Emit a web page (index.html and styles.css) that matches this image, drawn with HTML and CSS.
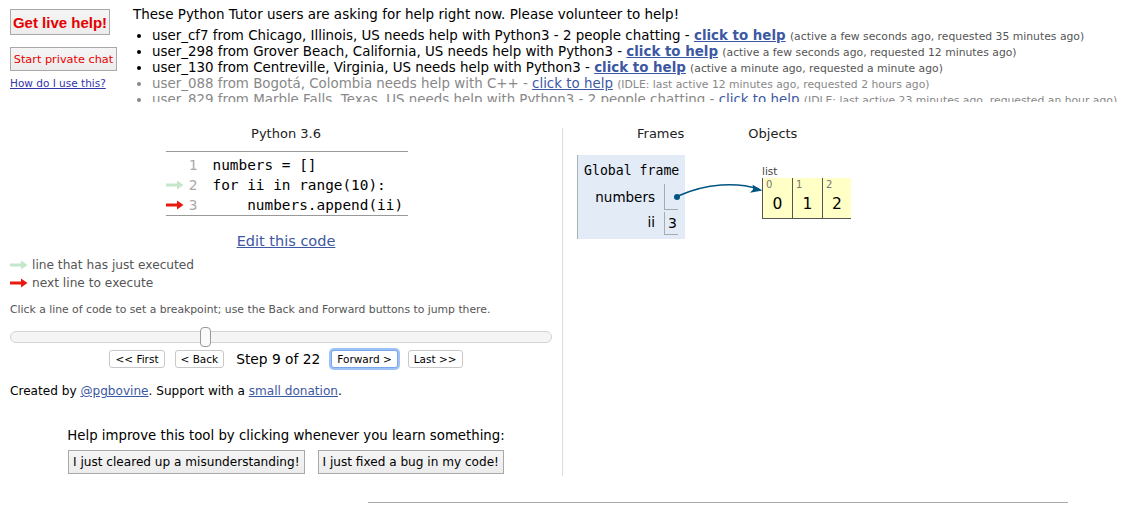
FILE: index.html
```html
<!DOCTYPE html>
<html>
<head>
<meta charset="utf-8">
<link rel="stylesheet" href="styles.css">
</head>
<body>
<div class="page">
  <div class="header">
    <div class="help-col">
      <button class="btn live-btn">Get live help!</button>
      <button class="btn chat-btn">Start private chat</button>
      <a class="howto" href="#">How do I use this?</a>
    </div>
    <div class="requests">
      <div class="req-title">These Python Tutor users are asking for help right now. Please volunteer to help!</div>
      <ul class="req-list">
        <li>user_cf7 from Chicago, Illinois, US needs help with Python3 - 2 people chatting - <a class="help-link" href="#">click to help</a> <span class="meta">(active a few seconds ago, requested 35 minutes ago)</span></li>
        <li>user_298 from Grover Beach, California, US needs help with Python3 - <a class="help-link" href="#">click to help</a> <span class="meta">(active a few seconds ago, requested 12 minutes ago)</span></li>
        <li>user_130 from Centreville, Virginia, US needs help with Python3 - <a class="help-link" href="#">click to help</a> <span class="meta">(active a minute ago, requested a minute ago)</span></li>
        <li class="idle">user_088 from Bogotá, Colombia needs help with C++ - <a class="idle-link" href="#">click to help</a> <span class="meta">(IDLE: last active 12 minutes ago, requested 2 hours ago)</span></li>
        <li class="idle">user_829 from Marble Falls, Texas, US needs help with Python3 - 2 people chatting - <a class="idle-link" href="#">click to help</a> <span class="meta">(IDLE: last active 23 minutes ago, requested an hour ago)</span></li>
      </ul>
    </div>
  </div>

  <div class="main">
    <div class="left-pane">
      <div class="lang">Python 3.6</div>
      <table class="code">
        <tr><td class="arrow"></td><td class="lineno">1</td><td class="src">numbers = []</td></tr>
        <tr><td class="arrow"><svg width="18" height="10" viewBox="0 0 18 10"><path d="M0 3.5H11V0.5L17.5 5L11 9.5V6.5H0Z" fill="#c5e6c8"/></svg></td><td class="lineno">2</td><td class="src">for ii in range(10):</td></tr>
        <tr><td class="arrow"><svg width="18" height="10" viewBox="0 0 18 10"><path d="M0 3.5H11V0.5L17.5 5L11 9.5V6.5H0Z" fill="#e8190e"/></svg></td><td class="lineno">3</td><td class="src">    numbers.append(ii)</td></tr>
      </table>
      <div class="edit"><a href="#">Edit this code</a></div>

      <div class="legend">
        <div class="legend-row"><svg width="18" height="10" viewBox="0 0 18 10"><path d="M0 3.5H11V0.5L17.5 5L11 9.5V6.5H0Z" fill="#c5e6c8"/></svg><span>line that has just executed</span></div>
        <div class="legend-row"><svg width="18" height="10" viewBox="0 0 18 10"><path d="M0 3.5H11V0.5L17.5 5L11 9.5V6.5H0Z" fill="#e8190e"/></svg><span>next line to execute</span></div>
      </div>

      <div class="hint">Click a line of code to set a breakpoint; use the Back and Forward buttons to jump there.</div>

      <div class="slider"><div class="handle"></div></div>

      <div class="nav">
        <button class="nav-btn">&lt;&lt; First</button>
        <button class="nav-btn">&lt; Back</button>
        <span class="step">Step 9 of 22</span>
        <button class="nav-btn focused">Forward &gt;</button>
        <button class="nav-btn">Last &gt;&gt;</button>
      </div>

      <div class="credits">Created by <a href="#">@pgbovine</a>. Support with a <a href="#">small donation</a>.</div>

      <div class="improve">
        <div>Help improve this tool by clicking whenever you learn something:</div>
        <div class="improve-btns">
          <button class="btn learn-btn">I just cleared up a misunderstanding!</button>
          <button class="btn learn-btn">I just fixed a bug in my code!</button>
        </div>
      </div>
    </div>

    <div class="right-pane">
      <div class="viz-heads"><span class="h-frames">Frames</span><span class="h-objects">Objects</span></div>
      <div class="viz">
        <div class="frame">
          <div class="frame-title">Global frame</div>
          <div class="var-row"><span class="var-name">numbers</span><span class="var-val ptr"><span class="dot"></span></span></div>
          <div class="var-row"><span class="var-name">ii</span><span class="var-val">3</span></div>
        </div>
        <div class="heap">
          <div class="obj-label">list</div>
          <div class="list">
            <div class="cell"><span class="idx">0</span><span class="val">0</span></div>
            <div class="cell"><span class="idx">1</span><span class="val">1</span></div>
            <div class="cell"><span class="idx">2</span><span class="val">2</span></div>
          </div>
        </div>
        <svg class="connector" width="200" height="60" viewBox="0 0 200 60">
          <path d="M101 41 C 130 28, 160 27, 182 34" fill="none" stroke="#005583" stroke-width="1.5"/>
          <path d="M185.5 35.5 L173 37.8 L176.2 34.2 L175.6 29.8 Z" fill="#005583"/>
        </svg>
      </div>
    </div>
  </div>
  <div class="bottom-rule"></div>
</div>
</body>
</html>
```

FILE: styles.css
```css
html, body {
  margin: 0;
  padding: 0;
  background: #fff;
}
body {
  font-family: "DejaVu Sans", Verdana, sans-serif;
  color: #000;
}
.page {
  width: 1142px;
  height: 516px;
  overflow: hidden;
  padding: 9px 0 0 10px;
  box-sizing: border-box;
}
a { color: #3d58a2; }

.header {
  display: flex;
  height: 95px;
}
.help-col {
  width: 123px;
  display: flex;
  flex-direction: column;
  align-items: flex-start;
}
.btn {
  font-family: "DejaVu Sans", Verdana, sans-serif;
  background: linear-gradient(#f5f5f5, #ececec);
  border: 1px solid #a9a9a9;
  border-radius: 0;
  padding: 0 5px;
  margin: 0;
  white-space: nowrap;
}
.live-btn {
  height: 26px;
  width: 100px;
  color: #e60000;
  font-family: "Liberation Sans", Arial, sans-serif;
  font-weight: bold;
  font-size: 15px;
  padding: 0;
}
.chat-btn {
  margin-top: 12px;
  height: 24px;
  width: 107px;
  padding: 0;
  color: #e60000;
  font-size: 11.3px;
}
.howto {
  margin-top: 6px;
  font-size: 10.5px;
  color: #3333aa;
}

.requests {
  font-size: 13px;
  line-height: 16px;
  margin-top: -3px;
}
.req-title { font-size: 13.5px; }
.req-list {
  margin: 6px 0 0;
  padding-left: 19px;
  height: 74px;
  overflow: hidden;
  white-space: nowrap;
}
.req-list li {
  font-size: 13.4px;
  height: 16px;
  line-height: 16px;
}
.help-link {
  font-weight: bold;
  color: #3d58a2;
}
.meta {
  font-size: 10.8px;
  color: #555;
}
.idle { color: #888; }
.idle .meta { color: #888; }
.idle-link { color: #3d58a2; }

.main {
  display: flex;
  margin-top: 24px;
}
.left-pane {
  width: 552px;
  display: flex;
  flex-direction: column;
  align-items: center;
}
.lang {
  font-size: 13px;
  line-height: 16px;
  color: #222;
  margin-top: -2px;
}
.code {
  margin-top: 9px;
  border-collapse: collapse;
  border-top: 1px solid #999;
  border-bottom: 1px solid #999;
  width: 242px;
  margin-left: 1px;
}
.code td {
  height: 20px;
  padding: 0;
  vertical-align: middle;
  font-family: "DejaVu Sans Mono", monospace;
  font-size: 14.4px;
}
.code tr:first-child td { padding-top: 3px; }
.code .arrow { width: 20px; }
.code .arrow svg { display: block; }
.code .lineno {
  color: #aaa;
  width: 12px;
  text-align: right;
  padding-right: 15px;
}
.code .src { white-space: pre; }
.edit {
  margin-top: 16px;
  font-size: 14.5px;
  line-height: 18px;
}
.legend {
  align-self: stretch;
  margin-top: 6px;
  font-size: 12.2px;
  color: #555;
}
.legend-row {
  display: flex;
  align-items: center;
  gap: 4px;
  height: 18px;
}
.legend-row svg { display: block; }
.hint {
  align-self: stretch;
  margin-top: 11px;
  font-size: 10.8px;
  color: #555;
  line-height: 14px;
}
.slider {
  align-self: stretch;
  margin-top: 14px;
  width: 540px;
  height: 10px;
  border: 1px solid #d4d4d4;
  border-radius: 6px;
  background: #f5f5f5;
  position: relative;
}
.handle {
  position: absolute;
  left: 189px;
  top: -5px;
  width: 9px;
  height: 18px;
  border: 1px solid #999;
  border-radius: 4px;
  background: #fafafa;
}
.nav {
  margin-top: 7px;
  display: flex;
  align-items: center;
  gap: 10px;
}
.nav-btn {
  font-family: "DejaVu Sans", Verdana, sans-serif;
  font-size: 10.5px;
  height: 18px;
  padding: 0 5px;
  border: 1px solid #c8c8c8;
  border-radius: 3px;
  background: #fff;
  color: #000;
  margin: 0;
}
.nav-btn.focused {
  border-color: #7aa7e8;
  box-shadow: 0 0 0 2px #9dc2f6;
}
.step {
  font-size: 13.8px;
  margin: 0 1px 0 2px;
}
.credits {
  align-self: stretch;
  margin-top: 15px;
  font-size: 12.1px;
  line-height: 16px;
}
.improve {
  margin-top: 29px;
  font-size: 13.3px;
  line-height: 16px;
  display: flex;
  flex-direction: column;
  align-items: center;
}
.improve-btns {
  margin-top: 6px;
  display: flex;
  gap: 13px;
}
.learn-btn {
  height: 24px;
  font-size: 12.1px;
  color: #000;
  padding: 0 4px;
}

.right-pane {
  border-left: 1px solid #ddd;
  height: 348px;
  padding-left: 14px;
  margin-top: 0;
}
.viz-heads {
  margin-top: -2px;
  font-size: 13px;
  line-height: 16px;
  color: #222;
  display: flex;
}
.h-frames { margin-left: 60px; }
.h-objects { margin-left: 64px; }
.viz {
  position: relative;
  display: flex;
  margin-top: 13px;
}
.frame {
  width: 108px;
  height: 84px;
  background: #e2ebf6;
  border-left: 1px solid #a6b3b6;
  box-sizing: border-box;
  padding-top: 8px;
}
.frame-title {
  font-family: "DejaVu Sans Mono", monospace;
  font-size: 13.2px;
  line-height: 16px;
  padding-left: 6px;
}
.var-row {
  display: flex;
  align-items: flex-end;
  margin-top: 5px;
}
.var-row + .var-row { margin-top: 1px; }
.var-name {
  width: 77px;
  text-align: right;
  font-size: 13.5px;
  line-height: 22px;
  padding-bottom: 2px;
}
.var-val {
  margin-left: 9px;
  border-left: 1px solid #aaa;
  border-bottom: 1px solid #aaa;
  width: 14px;
  height: 23px;
  font-size: 14px;
  line-height: 22px;
  padding-left: 3px;
  box-sizing: border-box;
  position: relative;
}
.ptr { height: 26px; }
.dot {
  position: absolute;
  right: -2px;
  top: 10px;
  width: 6px;
  height: 6px;
  border-radius: 50%;
  background: #005583;
}
.heap {
  margin-left: 77px;
  margin-top: 8px;
}
.obj-label {
  font-size: 10.5px;
  line-height: 12px;
  color: #444;
  margin-top: 2px;
}
.list {
  display: flex;
  background: #ffffc6;
  border-bottom: 1px solid #555;
  height: 41px;
  box-sizing: border-box;
  margin-top: 1px;
}
.cell {
  width: 30px;
  border-left: 1px solid #555;
  position: relative;
  box-sizing: border-box;
}
.cell:last-child { width: 29px; }
.idx {
  position: absolute;
  left: 3px;
  top: 1px;
  font-size: 10px;
  color: #777;
}
.val {
  position: absolute;
  left: 0;
  right: 0;
  top: 17px;
  text-align: center;
  font-size: 15.5px;
}
.connector {
  position: absolute;
  left: 0;
  top: 0;
  pointer-events: none;
}
.bottom-rule {
  margin-left: 358px;
  margin-top: 26px;
  width: 700px;
  border-top: 1px solid #aaa;
}
```
